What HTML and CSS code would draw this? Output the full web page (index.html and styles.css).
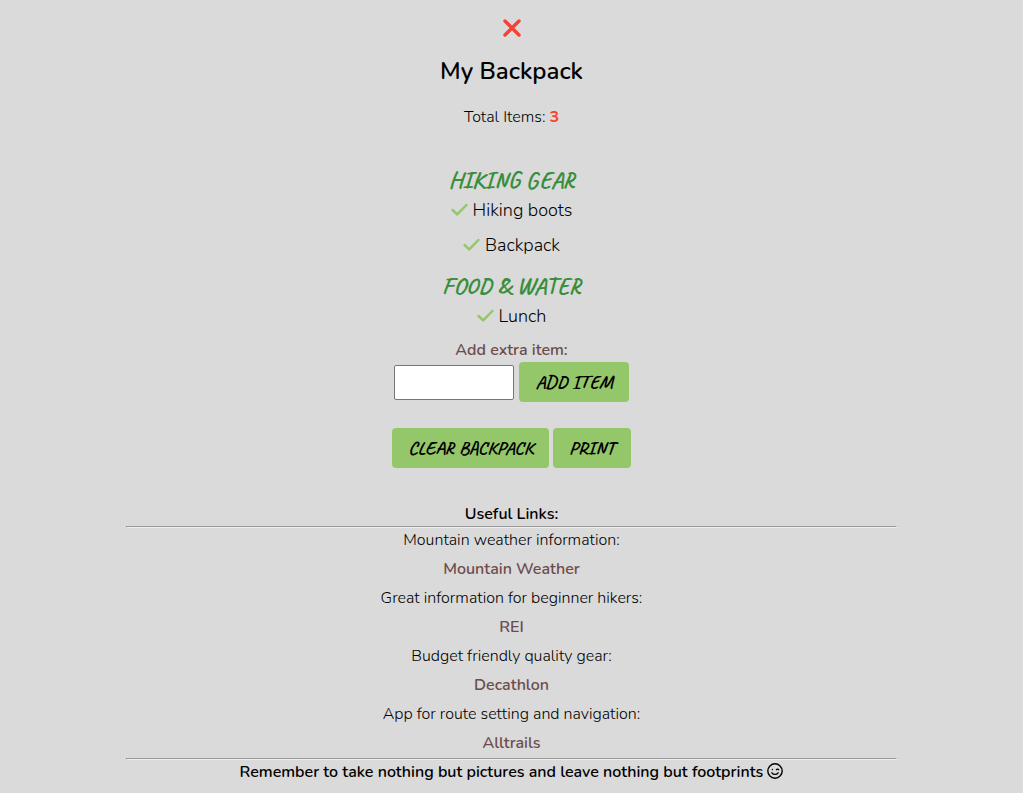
FILE: index.html
```
<!DOCTYPE html>
<html lang="en">
<head>
<meta charset="utf-8">
<meta name="viewport" content="width=device-width, initial-scale=1">
<title>My Backpack</title>
<link rel="stylesheet" href="styles.css">
</head>
<body>
<main class="backpack">
  <button class="close" type="button" aria-label="Close">
    <svg class="close-icon" viewBox="0 0 18 18"><path d="M2 2l14 14M16 2L2 16"/></svg>
  </button>
  <h1 class="title">My Backpack</h1>
  <p class="total">Total Items: <span class="count">3</span></p>

  <section class="category">
    <h2 class="category-title">HIKING GEAR</h2>
    <ul class="items">
      <li class="item"><svg class="check" viewBox="0 0 17 14"><path d="M1.6 7l4.6 4.4 9.2-9.4"/></svg>Hiking boots</li>
      <li class="item"><svg class="check" viewBox="0 0 17 14"><path d="M1.6 7l4.6 4.4 9.2-9.4"/></svg>Backpack</li>
    </ul>
  </section>
  <section class="category">
    <h2 class="category-title">FOOD &amp; WATER</h2>
    <ul class="items">
      <li class="item"><svg class="check" viewBox="0 0 17 14"><path d="M1.6 7l4.6 4.4 9.2-9.4"/></svg>Lunch</li>
    </ul>
  </section>

  <form class="add-form">
    <label class="add-label" for="extra">Add extra item:</label>
    <div class="add-row">
      <input class="add-input" id="extra" type="text">
      <button class="btn" type="button">ADD ITEM</button>
    </div>
  </form>
  <div class="actions">
    <button class="btn" type="button">CLEAR BACKPACK</button>
    <button class="btn" type="button">PRINT</button>
  </div>

  <h3 class="links-title">Useful Links:</h3>
  <hr class="rule">
  <div class="links">
    <p class="text">Mountain weather information:</p>
    <a class="link" href="#weather">Mountain Weather</a>
    <p class="text">Great information for beginner hikers:</p>
    <a class="link" href="#rei">REI</a>
    <p class="text">Budget friendly quality gear:</p>
    <a class="link" href="#decathlon">Decathlon</a>
    <p class="text">App for route setting and navigation:</p>
    <a class="link" href="#alltrails">Alltrails</a>
  </div>
  <hr class="rule">
  <p class="reminder">Remember to take nothing but pictures and leave nothing but footprints
    <svg class="smile" viewBox="0 0 16 16"><circle cx="8" cy="8" r="7.2"/><path d="M4.9 9.8c1.4 2.1 4.8 2.1 6.2 0M5.4 6.4v.1M9.5 6.7c.3-.8 1.9-.8 2.2 0"/></svg>
  </p>
</main>
</body>
</html>
```
FILE: styles.css
```
body {
  margin: 0;
  background: #dadada;
  color: #000;
  font: 16px/24px Nunito, "Open Sans", sans-serif;
  font-weight: 350;
}
h1, h2, h3, p, ul { margin: 0; padding: 0; }
.backpack {
  display: flex;
  flex-direction: column;
  align-items: center;
  padding: 14px 30px 8px;
  text-align: center;
}
.close {
  display: flex;
  padding: 5px;
  border: 0;
  background: none;
  cursor: pointer;
}
.close-icon {
  width: 18px;
  height: 18px;
  fill: none;
  stroke: #f44336;
  stroke-width: 3.4;
  stroke-linecap: round;
}
.title {
  margin-top: 13px;
  font-size: 24px;
  line-height: 32px;
  font-weight: 600;
}
.total { margin: 18px 0 27px; }
.count { color: #f44336; font-weight: 700; }
.category { margin-top: 12px; }
.category + .category { margin-top: 17px; }
.category-title {
  color: #388e3c;
  font: 700 24px/24px Caveat, "Caveat Brush", cursive;
}
.items {
  display: flex;
  flex-direction: column;
  gap: 11px;
  margin-top: 6px;
  list-style: none;
}
.item {
  display: flex;
  align-items: center;
  justify-content: center;
  gap: 5px;
  font-size: 18px;
}
.check {
  width: 17px;
  height: 14px;
  fill: none;
  stroke: #94c769;
  stroke-width: 2.5;
  stroke-linecap: round;
  stroke-linejoin: round;
}
.add-form { margin-top: 10px; }
.add-label { color: #6d4c4c; font-weight: 600; }
.add-row {
  display: flex;
  align-items: center;
  justify-content: center;
  gap: 5px;
}
.add-input {
  box-sizing: border-box;
  width: 120px;
  height: 35px;
  border: 1px solid #767676;
  border-radius: 2px;
  background: #fff;
  font: inherit;
}
.btn {
  padding: 8px 16px;
  border: 0;
  border-radius: 4px;
  background: #94c769;
  color: #000;
  font: 700 19px/24px Caveat, "Caveat Brush", cursive;
  cursor: pointer;
}
.actions {
  display: flex;
  gap: 4px;
  margin: 26px 0 34px;
}
.links-title { font-size: 16px; font-weight: 600; }
.rule {
  box-sizing: border-box;
  width: 80%;
  height: 2px;
  margin: 0;
  border: 1px solid;
  border-color: #999 #eee #eee #999;
}
.links {
  display: flex;
  flex-direction: column;
  align-items: center;
  gap: 5px;
  margin-bottom: 3px;
}
.link {
  color: #6d4c4c;
  font-weight: 600;
  text-decoration: none;
}
.reminder { font-weight: 600; }
.smile {
  width: 16px;
  height: 16px;
  vertical-align: -2px;
  fill: none;
  stroke: #000;
  stroke-width: 1.4;
  stroke-linecap: round;
}
```
